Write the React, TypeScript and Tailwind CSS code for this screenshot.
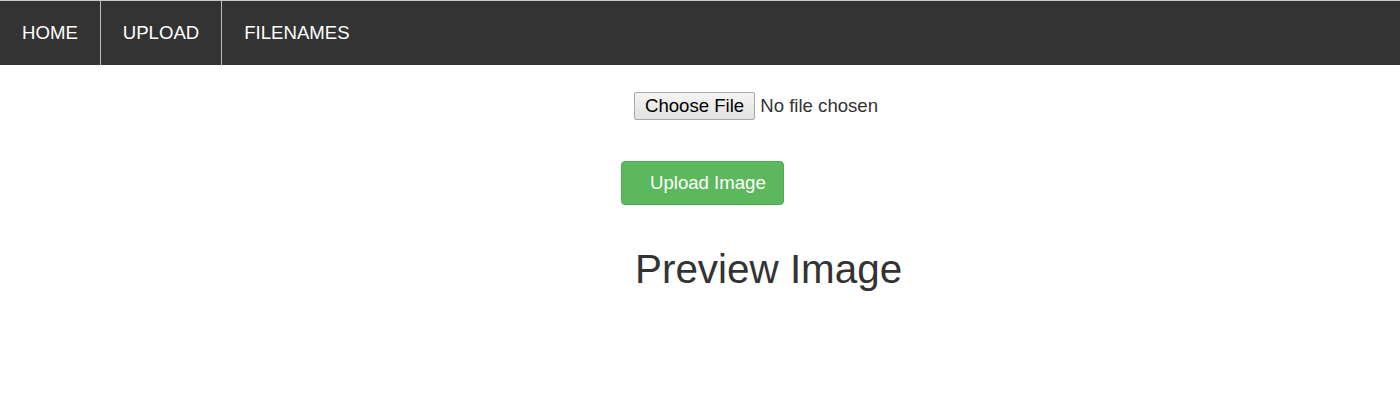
import React from 'react'

const navItems = ['HOME', 'UPLOAD', 'FILENAMES']

const App: React.FC = () => {
  return (
    <div className="min-h-[409px] bg-white font-['Liberation_Sans',Arial,sans-serif]">
      <nav className="flex h-[65px] border-t border-[#c8c8c8] bg-[#333333]">
        {navItems.map((item, i) => (
          <a
            key={item}
            href="#"
            className={`flex items-center px-[22px] text-[18.6px] text-white no-underline ${i < navItems.length - 1 ? 'border-r border-[#bdbdbd]' : ''}`}
          >
            {item}
          </a>
        ))}
      </nav>

      <div className="ml-[621px] flex flex-col items-start">
        <div className="mt-[27px] ml-[13px] flex items-center text-[18.6px] text-[#333333]">
          <button
            type="button"
            className="h-[28px] rounded-[2px] border border-[#a9a9a9] bg-gradient-to-b from-[#f4f4f4] to-[#e1e1e1] px-[10px] leading-[26px] text-black"
          >
            Choose File
          </button>
          <span className="ml-[5px]">No file chosen</span>
        </div>

        <button
          type="button"
          className="mt-[41px] h-[44px] rounded-[4px] border border-[#4cae4c] bg-[#5cb85c] pl-[28px] pr-[17px] text-[18.6px] leading-[42px] text-white"
        >
          Upload Image
        </button>

        <h1 className="mt-[42px] ml-[14px] text-[40.4px] leading-[44px] text-[#333333]">Preview Image</h1>
      </div>
    </div>
  )
}

export default App
